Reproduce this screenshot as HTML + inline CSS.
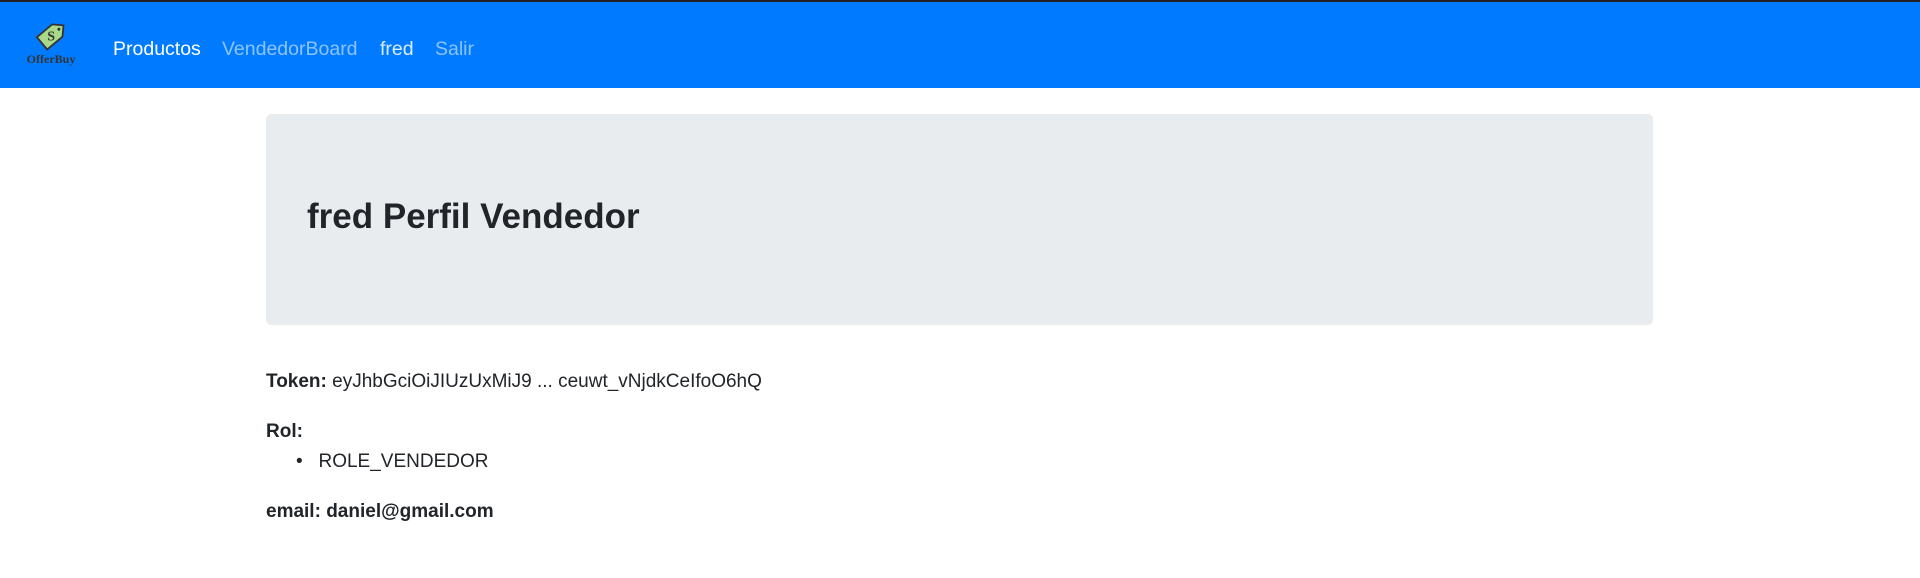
<!DOCTYPE html>
<html><head><meta charset="utf-8"><style>
*{box-sizing:border-box;margin:0;padding:0}
body{width:1920px;height:578px;overflow:hidden;background:#fff;font-family:"Liberation Sans",sans-serif;color:#212529}
.top{height:2px;background:#222}
nav{height:86px;background:#007bff;position:relative}
nav a{position:absolute;top:36px;font-size:19.5px;line-height:22px;text-decoration:none}
.logo{position:absolute;left:24px;top:19px}
.j{position:absolute;left:266px;top:114px;width:1387px;height:211px;background:#e9ecef;border-radius:5px}
h1{position:absolute;left:307px;top:197px;font-size:35px;font-weight:bold;line-height:40px}
.t{position:absolute;left:266px;font-size:19px;line-height:20px}
</style></head><body>
<div class="top"></div>
<nav>
<svg class="logo" width="54" height="46" viewBox="0 0 54 46">
<g transform="translate(28,14) rotate(-40)">
<path d="M-13,-8 L7,-8 L15,0 L7,8 L-13,8 Z" fill="#a8d88a" stroke="#333" stroke-width="1.8"/>
<circle cx="9" cy="0" r="1.5" fill="#333"/>
<text x="-5" y="5" font-size="14" font-weight="bold" fill="#333" font-family="Liberation Serif,serif" transform="rotate(40 -1 0)">S</text>
</g>
<text x="27" y="42" text-anchor="middle" font-size="12" font-weight="bold" fill="#333" font-family="Liberation Serif,serif">OfferBuy</text>
</svg>
<a style="left:113px;color:#fff">Productos</a>
<a style="left:222px;color:rgba(255,255,255,.55)">VendedorBoard</a>
<a style="left:380px;color:rgba(255,255,255,.85)">fred</a>
<a style="left:435px;color:rgba(255,255,255,.55)">Salir</a>
</nav>
<div class="j"></div>
<h1>fred Perfil Vendedor</h1>
<div class="t" style="top:372px"><b>Token:</b> eyJhbGciOiJIUzUxMiJ9 ... ceuwt_vNjdkCeIfoO6hQ</div>
<div class="t" style="top:422px"><b>Rol:</b></div>
<div class="t" style="top:452px;left:296px">•&nbsp;&nbsp;&nbsp;ROLE_VENDEDOR</div>
<div class="t" style="top:502px"><b>email: daniel@gmail.com</b></div>
</body></html>
